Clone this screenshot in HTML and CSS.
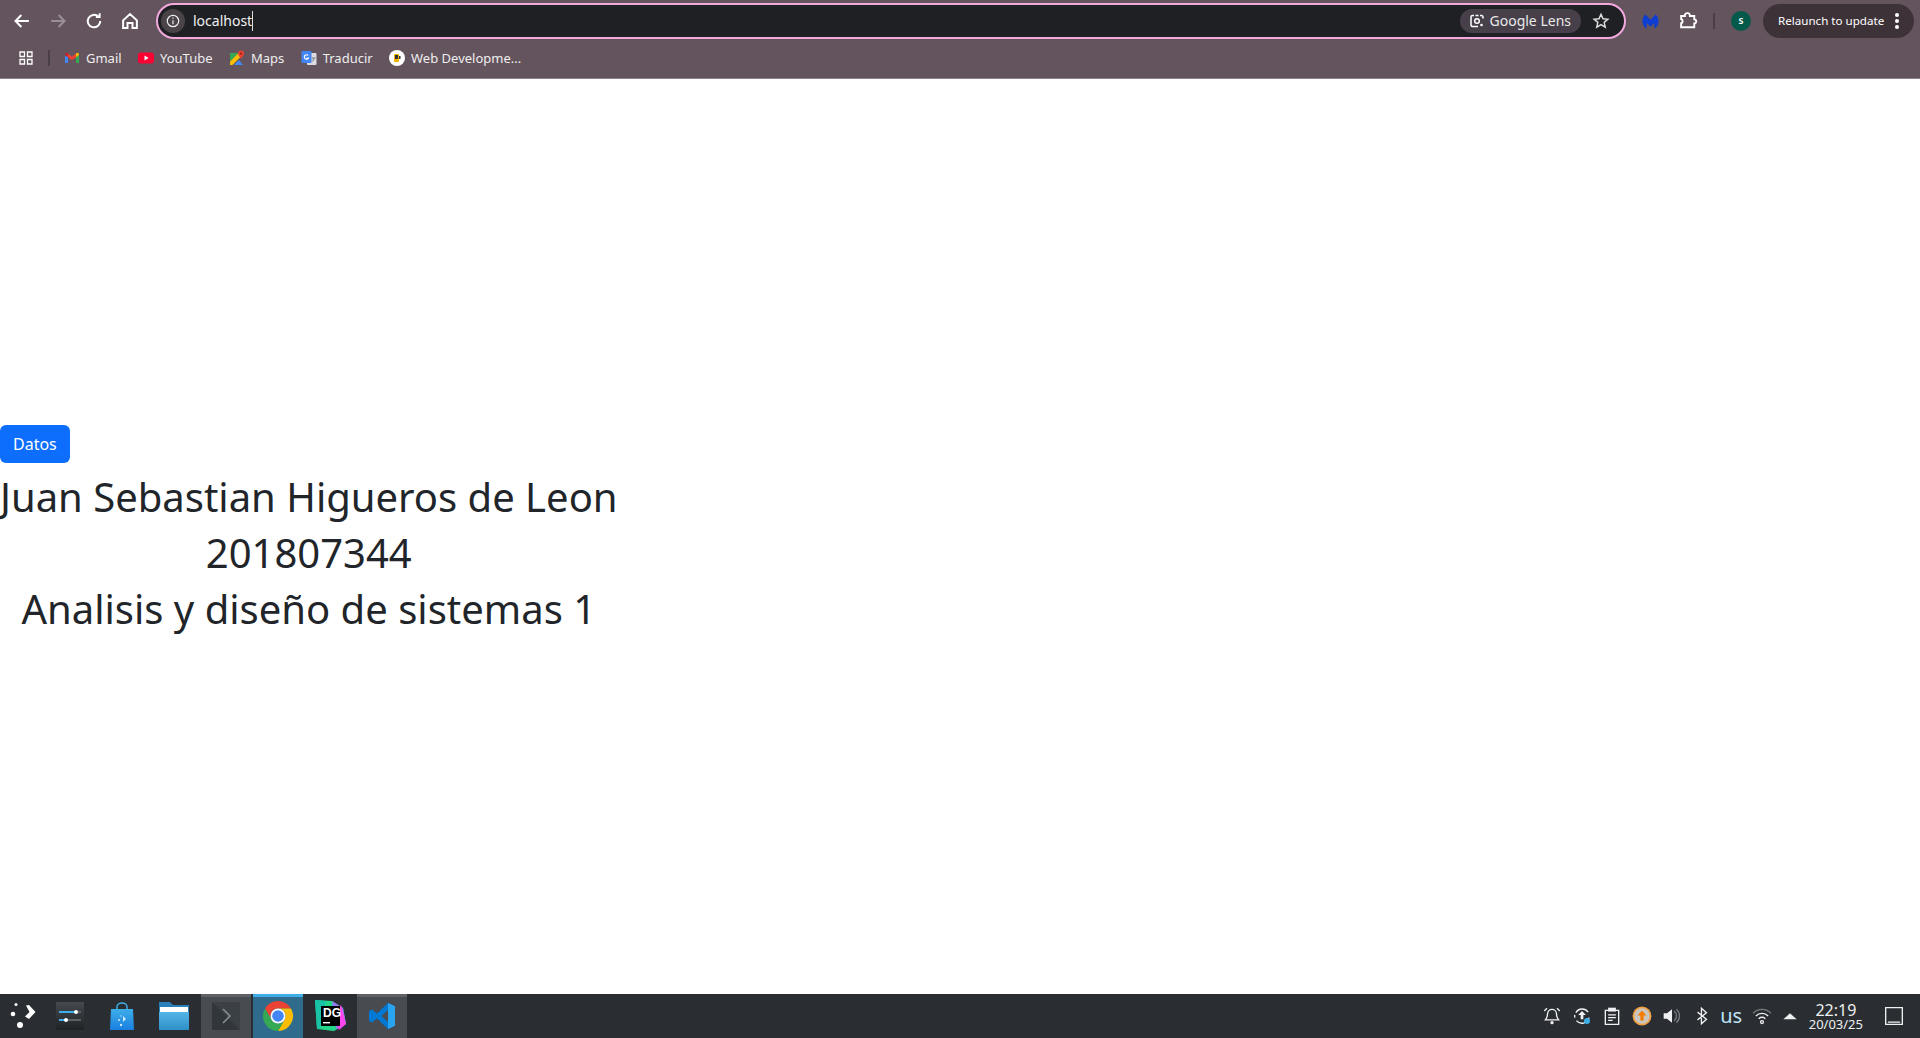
FILE: index.html
```html
<!DOCTYPE html>
<html lang="en">
<head>
    <meta charset="UTF-8">
    <title>localhost</title>
    <link rel="stylesheet" href="styles.css">
</head>
<body>
    <header class="browser">
        <div class="toolbar">
            <div class="nav-buttons">
                <svg class="nav-icon" viewBox="0 0 16 16"><path d="M13.500 8H3M7.500 3.200 2.800 8l4.700 4.800"/></svg>
                <svg class="nav-icon nav-off" viewBox="0 0 16 16"><path d="M2.500 8H13M8.500 3.200 13.200 8l-4.700 4.800"/></svg>
                <svg class="nav-icon" viewBox="0 0 16 16"><path d="M13 8a5 5 0 1 1-1.500-3.500M12.500 1.800v3h-3"/></svg>
                <svg class="nav-icon" viewBox="0 0 16 16"><path d="M2.500 7.500 8 2.500l5.500 5v6h-3.500v-4H6v4H2.500z"/></svg>
            </div>
            <div class="omnibox">
                <span class="site-info">
                    <svg class="info-icon" viewBox="0 0 16 16"><circle cx="8" cy="8" r="5.700"/><path d="M8 7.200v4M8 4.600v1.200"/></svg>
                </span>
                <span class="url">localhost</span>
                <span class="lens">
                    <svg class="lens-icon" viewBox="0 0 16 16"><path d="M5 2.500H3.500A1.500 1.500 0 0 0 2 4v8a1.500 1.500 0 0 0 1.500 1.500H9M11 2.500h1.500A1.500 1.500 0 0 1 14 4v1.500M6.500 2.500h3"/><circle cx="8" cy="8" r="2.300"/><circle class="dot" cx="12.500" cy="12" r="1.300"/></svg>
                    <span class="lens-label">Google Lens</span>
                </span>
                <svg class="star-icon" viewBox="0 0 16 16"><path d="m8 2 1.800 4 4.300.4-3.300 2.800 1 4.300L8 11.300l-3.800 2.200 1-4.300-3.300-2.800 4.300-.4z"/></svg>
            </div>
            <div class="actions">
                <svg class="mb-icon" viewBox="0 0 18 16"><path d="M3.500.5 9 6l5.500-5.500C17 3 18 6 17.500 9c-.3 2.500-2 5-4.500 6.500v-6L9 13.500l-4-4v6C2.500 14 .8 11.500.5 9 0 6 1 3 3.500.5z"/></svg>
                <svg class="ext-icon" viewBox="0 0 16 16"><path d="M2.500 4h3a2 2 0 0 1 4-.5V4h3.500v2.700a1.600 1.600 0 0 1 0 3.200V13H2.500V9.800a1.800 1.800 0 0 0 0-3.400z"/></svg>
                <span class="divider"></span>
                <span class="avatar">s</span>
                <span class="relaunch">
                    <span class="relaunch-label">Relaunch to update</span>
                    <span class="kebab"><i></i><i></i><i></i></span>
                </span>
            </div>
        </div>
        <div class="bookmarks">
            <svg class="apps-icon" viewBox="0 0 14 14"><path d="M1 1h4.500v4.500H1zM8.500 1H13v4.500H8.500zM1 8.500h4.500V13H1zM8.500 8.500H13V13H8.500z"/></svg>
            <span class="divider"></span>
            <span class="bookmark">
                <svg class="bm-icon" viewBox="0 0 16 16"><path fill="#4285f4" d="M1 13V5l3 2.200V13z"/><path fill="#34a853" d="M12 13V7.200L15 5v8z"/><path fill="#ea4335" d="M4 7.200l4 3 4-3V3.600l-4 3-4-3z"/><path fill="#fbbc04" d="M12 3.600v3.600L15 5v-.5c0-1.300-1.500-2-2.500-1.300z"/><path fill="#c5221f" d="M4 3.600v3.600L1 5v-.5c0-1.300 1.500-2 2.500-1.300z"/></svg>
                Gmail
            </span>
            <span class="bookmark">
                <svg class="bm-icon" viewBox="0 0 16 16"><rect fill="#f03" y="2.500" width="16" height="11" rx="3"/><path fill="#fff" d="m6.500 5.500 4.200 2.500-4.200 2.500z"/></svg>
                YouTube
            </span>
            <span class="bookmark">
                <svg class="bm-icon" viewBox="0 0 16 16"><path fill="#34a853" d="M1 3h8.500L1 11.500z"/><path fill="#fbbc04" d="M1 11.500 9.500 3l3 3L3.500 15H1z"/><path fill="#4285f4" d="M5 15l5-5 4 5z"/><path fill="#ea4335" d="M12 .5a3 3 0 0 1 3 3c0 2-2 3.500-3 5.500-1-2-3-3.500-3-5.500a3 3 0 0 1 3-3z"/><circle fill="#8a1c14" cx="12" cy="3.500" r="1"/></svg>
                Maps
            </span>
            <span class="bookmark">
                <svg class="bm-icon" viewBox="0 0 16 16"><rect fill="#dadce0" x="6" y="3" width="9.500" height="12" rx="1"/><rect fill="#4285f4" x=".5" y="1" width="10" height="12" rx="1"/><path fill="none" stroke="#fff" stroke-width="1.200" d="M7.200 5.500A2.200 2.200 0 1 0 7.500 8H5.500"/><path fill="none" stroke="#777" d="M11 8h3.500M12.800 8c0 2-1 3-2 3.500"/></svg>
                Traducir
            </span>
            <span class="bookmark">
                <svg class="bm-icon" viewBox="0 0 16 16"><circle fill="#fff" cx="8" cy="8" r="8"/><rect fill="#f4b400" x="5" y="4" width="5" height="8" rx="1"/><rect fill="#333" x="6" y="5" width="3" height="4"/><rect fill="#333" x="10" y="6" width="1.500" height="3"/></svg>
                Web Developme...
            </span>
        </div>
    </header>

    <main class="page">
        <button class="btn-datos" type="button">Datos</button>
        <div class="info-block">
            <div>Juan Sebastian Higueros de Leon</div>
            <div>201807344</div>
            <div>Analisis y diseño de sistemas 1</div>
        </div>
    </main>

    <footer class="taskbar">
        <div class="launcher">
            <svg class="task-icon" viewBox="0 0 30 30"><circle cx="8" cy="4.500" r="1.500"/><circle cx="5" cy="14" r="2.300"/><circle cx="12" cy="25" r="3"/><path d="M18 5.500 21 5l6.500 7-6.500 7-4-2.500 4.500-4.500z"/></svg>
        </div>
        <div class="task-slot">
            <svg class="app-icon" viewBox="0 0 30 30">
                <defs><linearGradient id="panelGrad" x1="0" y1="0" x2="0" y2="1"><stop offset="0" stop-color="#454a4e"/><stop offset="1" stop-color="#1f2225"/></linearGradient></defs>
                <rect x="1" y="1" width="28" height="28" fill="url(#panelGrad)"/>
                <path d="M4 11h17M4 19h7" stroke="#3daee9" stroke-width="2"/>
                <path d="M21 11h5M11 19h15" stroke="#5c6166" stroke-width="2"/>
                <circle cx="21" cy="11" r="2" fill="#fff"/><circle cx="11" cy="19" r="2" fill="#fff"/>
            </svg>
        </div>
        <div class="task-slot">
            <svg class="app-icon" viewBox="0 0 30 30">
                <defs><linearGradient id="bagGrad" x1="0" y1="0" x2="0" y2="1"><stop offset="0" stop-color="#3daee9"/><stop offset="1" stop-color="#1a7fe0"/></linearGradient></defs>
                <path d="M10 9V6a5 4 0 0 1 10 0v3" fill="none" stroke="#3daee9" stroke-width="1.500"/>
                <path d="M4 8h22l1 21H3z" fill="url(#bagGrad)"/>
                <circle cx="12" cy="19" r="1" fill="#cfe9fb"/><circle cx="14" cy="24" r="1.200" fill="#cfe9fb"/><circle cx="14" cy="15" r=".7" fill="#cfe9fb"/>
                <path d="m16 15 3 3-3 3z" fill="#cfe9fb"/>
            </svg>
        </div>
        <div class="task-slot">
            <svg class="app-icon" viewBox="0 0 30 30">
                <defs><linearGradient id="folderGrad" x1="0" y1="0" x2="0" y2="1"><stop offset="0" stop-color="#52b5e6"/><stop offset="1" stop-color="#2f8fc8"/></linearGradient></defs>
                <path d="M0 1h11l3 3h16v25H0z" fill="#2980b9"/><rect x="1" y="6" width="28" height="5" fill="#fff"/><path d="M0 11h30v18H0z" fill="url(#folderGrad)"/>
            </svg>
        </div>
        <div class="task-slot slot-open">
            <svg class="term-icon" viewBox="0 0 28 28"><rect width="28" height="28" fill="#31363b"/><path d="M0 0h28v28z" fill="#3b4045"/><path d="m11 7 7 7-7 7" fill="none" stroke="#8a8f94" stroke-width="1.500"/></svg>
        </div>
        <div class="task-slot slot-active">
            <svg class="chrome-icon" viewBox="0 0 32 32">
                <path fill="#ea4335" d="M3 8.500a15 15 0 0 1 26 0H16a7.500 7.500 0 0 0-6.500 11.250z"/>
                <path fill="#fbbc04" d="M29 8.500A15 15 0 0 1 16 31l6.500-11.250A7.500 7.500 0 0 0 16 8.500z"/>
                <path fill="#34a853" d="M16 31A15 15 0 0 1 3 8.500l6.500 11.250a7.500 7.500 0 0 0 13 0z"/>
                <circle fill="#fff" cx="16" cy="16" r="7.500"/><circle fill="#4285f4" cx="16" cy="16" r="5.800"/>
            </svg>
        </div>
        <div class="task-slot">
            <svg class="chrome-icon" viewBox="0 0 32 32"><path d="M1 0 18 1 29 8 32 24 20 31 3 29z" fill="#21d789"/><path d="M3 29 1 0 12 1 6 29z" fill="#18c3a8"/><path d="M18 1 29 8 32 24 22 29z" fill="#9775f8"/><path d="M27 5 32 24 25 30 20 16z" fill="#ff45ed"/><rect x="7" y="6" width="19" height="20" fill="#000"/><text class="dg-text" x="9" y="17">DG</text><rect x="9" y="22" width="7" height="1.400" fill="#fff"/></svg>
        </div>
        <div class="task-slot slot-open">
            <svg class="term-icon" viewBox="0 0 28 28"><path d="M20 1 27 4.300v19.400L20 27 9 16.500 4 20.500 1 18.800V9.200L4 7.500l5 4zM20 8l-6.500 6 6.500 6z" fill="#0078d4"/><path d="M20 1 27 4.300v19.400L20 27z" fill="#2aa4ef"/></svg>
        </div>
        <div class="tray">
            <svg class="tray-icon" viewBox="0 0 18 18"><path d="M9 3a4 4 0 0 1 4 4c0 3 1 4 2 5.500H3C4 11 5 10 5 7a4 4 0 0 1 4-4zM2 4.500 4.500 2M16 4.500 13.500 2"/><circle class="fill" cx="9" cy="15" r="1.500"/></svg>
            <svg class="tray-icon" viewBox="0 0 18 18"><path d="M3.500 6A6.500 6.500 0 0 1 14.500 5.500M15.300 10.500A6.500 6.500 0 0 1 4 13.200M2.600 10.500A6.500 6.500 0 0 1 2.500 8"/><path class="fill" d="M9 4.500 12.500 8H10.200v4H7.800V8H5.500z"/><circle class="dot-blue" cx="13.500" cy="13.500" r="2.700"/></svg>
            <svg class="tray-icon" viewBox="0 0 18 18"><path d="M3 4h12v12.500H3z"/><path class="fill" d="M5.500 1.500h7V5h-7z"/><path d="M5.500 8h7M5.500 10.500h7M5.500 13h4"/></svg>
            <svg class="tray-icon" viewBox="0 0 18 18"><circle class="ring" cx="9" cy="9" r="8.500"/><circle class="ring-inner" cx="9" cy="9" r="7"/><path class="arrow" d="m9 4 4 4.500h-2.500V13h-3V8.500H5z"/></svg>
            <svg class="tray-icon" viewBox="0 0 18 18"><path class="fill" d="M1.500 6.500h3L9 3v12l-4.500-3.500h-3z"/><path class="faint" d="M11 4.500a6 6 0 0 1 0 9M13 3a8 8 0 0 1 0 12"/></svg>
            <svg class="tray-icon" viewBox="0 0 18 18"><path d="M5 5.500 13 12l-4.500 4V2L13 6l-8 6.500"/></svg>
            <span class="kb-layout">us</span>
            <svg class="tray-icon" viewBox="0 0 18 18"><path class="faint" d="M1 6.500a11 11 0 0 1 16 0"/><path d="M3.500 9a7.500 7.500 0 0 1 11 0M6 11.500a4 4 0 0 1 6 0"/><circle cx="9" cy="14.500" r="1.300"/></svg>
            <svg class="tray-icon tray-arrow" viewBox="0 0 18 18"><path class="fill" d="M3 12 9 6.500l6 5.500z"/></svg>
            <div class="clock">
                <span class="clock-time">22:19</span>
                <span class="clock-date">20/03/25</span>
            </div>
            <svg class="tray-icon desktop-icon" viewBox="0 0 18 18"><path d="M1.500 1.500h15v15h-15zM3.500 14.500h11"/></svg>
        </div>
    </footer>
</body>
</html>
```

FILE: styles.css
```css
* {
    box-sizing: border-box;
}

html,
body {
    height: 100%;
}

body {
    margin: 0;
    display: flex;
    flex-direction: column;
    height: 1038px;
    overflow: hidden;
    background-color: #fff;
    font-family: "Noto Sans", sans-serif;
}

/* browser chrome */
.browser {
    height: 79px;
    background-color: #64545e;
    color: #fff;
    border-bottom: 1px solid #8d8089;
}

.toolbar {
    display: flex;
    align-items: center;
    height: 42px;
}

.nav-buttons {
    display: flex;
    align-items: center;
    gap: 16px;
    padding-left: 12px;
    width: 156px;
}

.nav-icon {
    width: 20px;
    height: 20px;
    flex: none;
    fill: none;
    stroke: #fff;
    stroke-width: 1.600;
}

.nav-off {
    stroke: #9a8f96;
}

.omnibox {
    display: flex;
    align-items: center;
    width: 1470px;
    height: 36px;
    border: 2px solid #f3a8de;
    border-radius: 18px;
    background-color: #1f2024;
    padding: 0 14px 0 3px;
}

.site-info {
    display: flex;
    align-items: center;
    justify-content: center;
    width: 24px;
    height: 24px;
    margin-right: 8px;
    border-radius: 50%;
    background-color: #4a4347;
}

.info-icon {
    width: 16px;
    height: 16px;
    fill: none;
    stroke: #eee;
    stroke-width: 1.200;
}

.url {
    flex: 1;
    padding-bottom: 2px;
    font-size: 14px;
    color: #f1f1f1;
}

.url::after {
    content: "";
    display: inline-block;
    width: 1px;
    height: 20px;
    margin-bottom: -5px;
    background-color: #ddd;
}

.lens {
    display: flex;
    align-items: center;
    gap: 5px;
    height: 24px;
    padding: 0 10px 0 9px;
    border-radius: 12px;
    background-color: #47404a;
    font-size: 14px;
    color: #e8e8e8;
}

.lens-label {
    padding-bottom: 2px;
}

.lens-icon {
    width: 16px;
    height: 16px;
    fill: none;
    stroke: #fff;
    stroke-width: 1.500;
}

.lens-icon .dot {
    fill: #fff;
    stroke: none;
}

.star-icon {
    width: 18px;
    height: 18px;
    margin-left: 11px;
    fill: none;
    stroke: #ddd;
    stroke-width: 1.300;
}

.actions {
    display: flex;
    align-items: center;
    flex: 1;
    padding-left: 16px;
}

.mb-icon {
    width: 17px;
    height: 15px;
    fill: #0d3ed1;
}

.ext-icon {
    width: 20px;
    height: 20px;
    margin-left: 19px;
    fill: none;
    stroke: #fff;
    stroke-width: 1.500;
}

.divider {
    width: 2px;
    height: 16px;
    background-color: #4a3f46;
}

.actions .divider {
    margin: 0 16px 0 15px;
}

.avatar {
    display: flex;
    align-items: center;
    justify-content: center;
    width: 20px;
    height: 20px;
    border-radius: 50%;
    background-color: #03594a;
    font-size: 10px;
    font-weight: 600;
    padding-bottom: 2px;
}

.relaunch {
    display: flex;
    align-items: center;
    height: 34px;
    width: 151px;
    margin-left: 12px;
    padding-left: 15px;
    border-radius: 17px;
    background-color: #3e3239;
    font-size: 11.600px;
    white-space: nowrap;
}

.relaunch-label {
    padding-bottom: 2px;
}

.kebab {
    display: flex;
    flex-direction: column;
    gap: 2px;
    margin-left: 11px;
}

.kebab i {
    width: 4px;
    height: 4px;
    border-radius: 50%;
    background-color: #fff;
}

.bookmarks {
    display: flex;
    align-items: center;
    height: 36px;
    padding: 0 0 4px 19px;
    font-size: 13px;
    color: #eee;
}

.apps-icon {
    width: 14px;
    height: 14px;
    fill: none;
    stroke: #fff;
    stroke-width: 1.300;
}

.bookmarks .divider {
    margin: 0 14px 0 15px;
}

.bookmark {
    display: flex;
    align-items: center;
    gap: 6px;
    margin-right: 16.400px;
    white-space: nowrap;
}

.bm-icon {
    width: 16px;
    height: 16px;
    flex: none;
}

/* page content */
.page {
    flex: 1;
    display: flex;
    flex-direction: column;
    justify-content: center;
    align-items: flex-start;
    padding-bottom: 11px;
}

.btn-datos {
    height: 38px;
    padding: 0 13px;
    border: 0;
    border-radius: 6px;
    background-color: #0d6efd;
    color: #fff;
    font-family: inherit;
    font-size: 16px;
}

.info-block {
    margin-top: 6px;
    text-align: center;
    font-size: 40px;
    line-height: 56px;
    color: #212529;
}

/* desktop panel */
.taskbar {
    display: flex;
    align-items: stretch;
    height: 44px;
    background-color: #2a2e32;
}

.launcher {
    display: flex;
    align-items: center;
    justify-content: center;
    width: 45px;
    padding-bottom: 2px;
}

.task-icon {
    width: 30px;
    height: 30px;
    fill: #fff;
}

.task-slot {
    display: flex;
    align-items: center;
    justify-content: center;
    width: 50px;
    border-top: 3px solid transparent;
    padding-bottom: 3px;
    margin-right: 2px;
}

.slot-open {
    background-color: #484c50;
    border-top-color: #5d6165;
}

.slot-active {
    background-color: #2f6b8c;
    border-top-color: #3daee9;
}

.app-icon {
    width: 30px;
    height: 30px;
}

.term-icon {
    width: 28px;
    height: 28px;
}

.chrome-icon {
    width: 32px;
    height: 32px;
}

.dg-text {
    font-family: "Liberation Sans", sans-serif;
    font-size: 12px;
    font-weight: 700;
    fill: #fff;
}

.tray {
    display: flex;
    align-items: center;
    gap: 10px;
    margin-left: auto;
    padding-right: 16px;
    color: #eff0f1;
}

.tray-icon {
    width: 20px;
    height: 20px;
    fill: none;
    stroke: #eff0f1;
    stroke-width: 1.200;
    flex: none;
}

.tray-icon .fill {
    fill: #eff0f1;
    stroke: none;
}

.tray-icon .faint {
    stroke: #777b7f;
}

.tray-icon .dot-blue {
    fill: #3daee9;
    stroke: none;
}

.tray-icon .ring {
    fill: #f0a040;
    stroke: none;
}

.tray-icon .ring-inner {
    fill: #c9c5bf;
    stroke: none;
}

.tray-icon .arrow {
    fill: #f57c00;
    stroke: none;
}

.tray-arrow {
    margin-left: -2px;
}

.kb-layout {
    margin: 0 -0.500px 0 -1.500px;
    font-size: 20px;
    line-height: 1;
    color: #bfe3f7;
}

.clock {
    display: flex;
    flex-direction: column;
    align-items: center;
    margin-left: -1px;
    padding-top: 2px;
}

.clock-time {
    font-size: 16px;
    line-height: 15px;
}

.clock-date {
    font-size: 13px;
    line-height: 13px;
}

.desktop-icon {
    margin-left: 11px;
}
```
